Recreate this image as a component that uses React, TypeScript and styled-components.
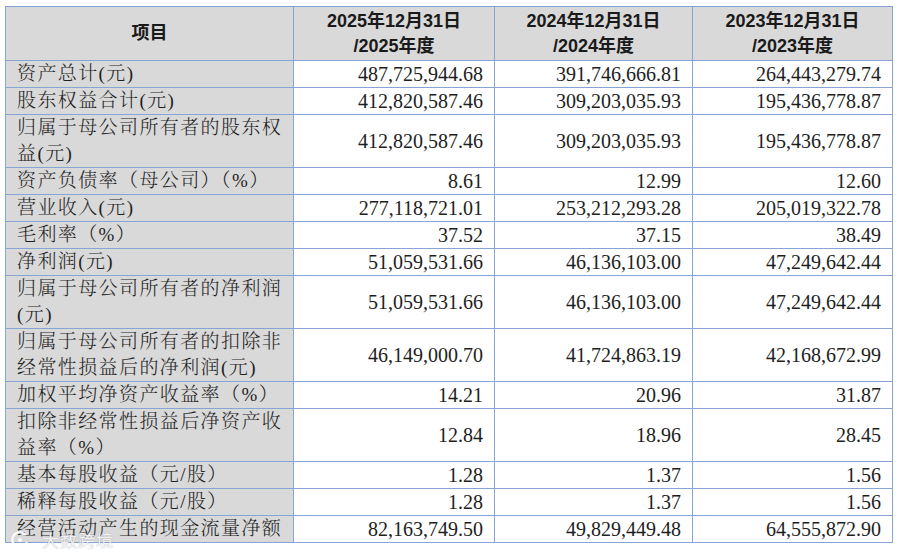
import * as React from 'react'
import styled, { createGlobalStyle } from 'styled-components'

const GlobalStyle = createGlobalStyle`
  html, body {
    margin: 0;
    padding: 0;
    background: #ffffff;
  }
`

const Page = styled.div`
  position: relative;
  width: 900px;
  height: 554px;
  padding: 6px 0 0 5px;
  box-sizing: border-box;
  overflow: hidden;
`

const Table = styled.table`
  border-collapse: collapse;
  table-layout: fixed;
  width: 887px;

  col:nth-child(1) { width: 288px; }
  col:nth-child(2) { width: 201px; }
  col:nth-child(3) { width: 198px; }
  col:nth-child(4) { width: 200px; }
`

const HeadCell = styled.th`
  background: #d9d9d9;
  border: 1.5px solid #86a4d4;
  height: 53px;
  padding: 0;
  font-family: "Liberation Sans", "Noto Sans CJK SC", sans-serif;
  font-weight: 700;
  font-size: 18px;
  line-height: 25px;
  color: #1a1a1a;
  text-align: center;
`

const LabelCell = styled.td<{ $tall?: boolean }>`
  background: #d9d9d9;
  border: 1.5px solid #86a4d4;
  height: ${(p) => (p.$tall ? '52px' : '25.5px')};
  padding: 0 0 0 11px;
  font-family: "Liberation Serif", "Noto Serif CJK SC", "Noto Sans CJK SC", serif;
  font-size: 19px;
  font-weight: 300;
  letter-spacing: 1.4px;
  line-height: 26px;
  color: #1f1f1f;
  white-space: nowrap;
`

const ValueCell = styled.td`
  background: #ffffff;
  border: 1.5px solid #86a4d4;
  padding: 0 11px 0 0;
  font-family: "Liberation Serif", "Times New Roman", serif;
  font-size: 20px;
  color: #1e1e1e;
  text-align: right;
  vertical-align: middle;
`

const Watermark = styled.div`
  position: absolute;
  left: 10px;
  top: 527px;
  display: flex;
  align-items: center;
  gap: 12px;
  color: rgba(255, 255, 255, 0.9);
  font-family: "Noto Sans CJK SC", sans-serif;
  font-size: 17px;
  letter-spacing: 1px;
  text-shadow: 0 0 1px rgba(90, 100, 120, 0.6);
  pointer-events: none;
`

type Row = { label: string[]; values: [string, string, string] }

const rows: Row[] = [
  { label: ['资产总计(元)'], values: ['487,725,944.68', '391,746,666.81', '264,443,279.74'] },
  { label: ['股东权益合计(元)'], values: ['412,820,587.46', '309,203,035.93', '195,436,778.87'] },
  { label: ['归属于母公司所有者的股东权', '益(元)'], values: ['412,820,587.46', '309,203,035.93', '195,436,778.87'] },
  { label: ['资产负债率（母公司）（%）'], values: ['8.61', '12.99', '12.60'] },
  { label: ['营业收入(元)'], values: ['277,118,721.01', '253,212,293.28', '205,019,322.78'] },
  { label: ['毛利率（%）'], values: ['37.52', '37.15', '38.49'] },
  { label: ['净利润(元)'], values: ['51,059,531.66', '46,136,103.00', '47,249,642.44'] },
  { label: ['归属于母公司所有者的净利润', '(元)'], values: ['51,059,531.66', '46,136,103.00', '47,249,642.44'] },
  { label: ['归属于母公司所有者的扣除非', '经常性损益后的净利润(元)'], values: ['46,149,000.70', '41,724,863.19', '42,168,672.99'] },
  { label: ['加权平均净资产收益率（%）'], values: ['14.21', '20.96', '31.87'] },
  { label: ['扣除非经常性损益后净资产收', '益率（%）'], values: ['12.84', '18.96', '28.45'] },
  { label: ['基本每股收益（元/股）'], values: ['1.28', '1.37', '1.56'] },
  { label: ['稀释每股收益（元/股）'], values: ['1.28', '1.37', '1.56'] },
  { label: ['经营活动产生的现金流量净额'], values: ['82,163,749.50', '49,829,449.48', '64,555,872.90'] },
]

const years = ['2025', '2024', '2023']

export default function App() {
  return (
    <>
      <GlobalStyle />
      <Page>
        <Table>
          <colgroup>
            <col />
            <col />
            <col />
            <col />
          </colgroup>
          <thead>
            <tr>
              <HeadCell>项目</HeadCell>
              {years.map((y) => (
                <HeadCell key={y}>
                  {y}年12月31日
                  <br />/{y}年度
                </HeadCell>
              ))}
            </tr>
          </thead>
          <tbody>
            {rows.map((r, i) => (
              <tr key={i}>
                <LabelCell $tall={r.label.length > 1}>
                  {r.label.map((l, j) => (
                    <React.Fragment key={j}>
                      {j > 0 && <br />}
                      {l}
                    </React.Fragment>
                  ))}
                </LabelCell>
                {r.values.map((v, j) => (
                  <ValueCell key={j}>{v}</ValueCell>
                ))}
              </tr>
            ))}
          </tbody>
        </Table>
        <Watermark>
          <svg width="20" height="20" viewBox="0 0 20 20">
            <path d="M15 4.5 A7.5 7.5 0 1 0 16.5 13" fill="none" stroke="rgba(255,255,255,0.95)" strokeWidth="2.2" strokeLinecap="round" />
            <circle cx="10" cy="10" r="2" fill="rgba(255,255,255,0.95)" />
          </svg>
          <span>大数跨境</span>
        </Watermark>
      </Page>
    </>
  )
}
